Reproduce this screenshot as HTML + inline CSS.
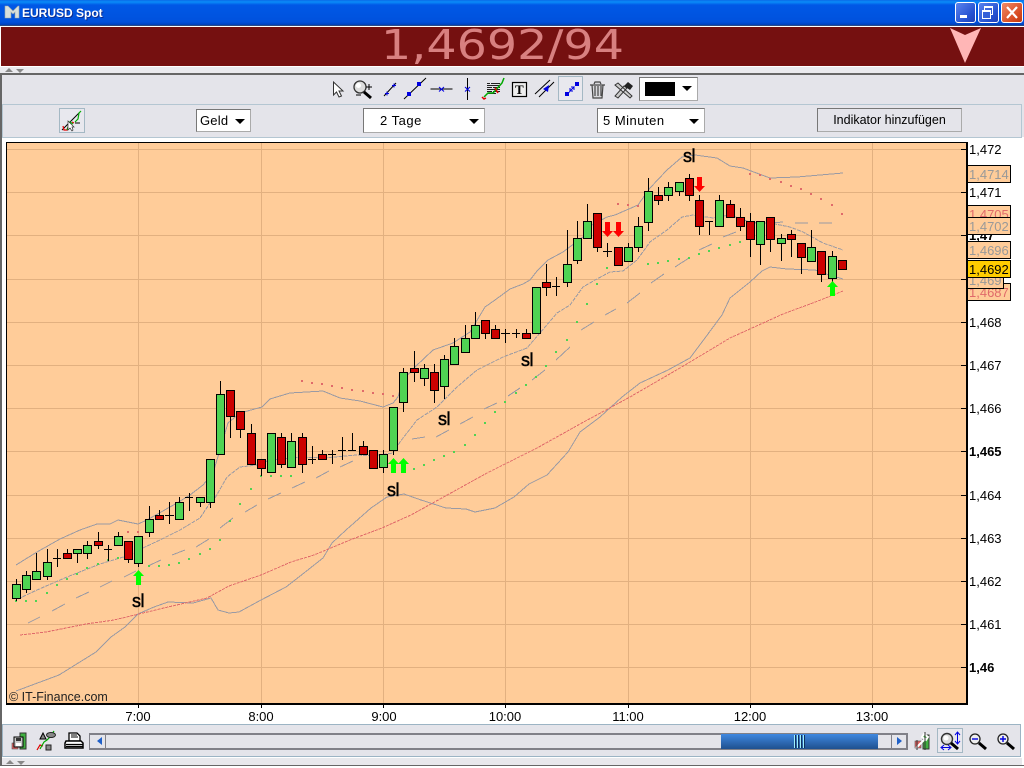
<!DOCTYPE html>
<html><head><meta charset="utf-8"><title>EURUSD Spot</title>
<style>
html,body{margin:0;padding:0;width:1024px;height:768px;overflow:hidden;background:#fff;font-family:"Liberation Sans",sans-serif;color:#000}
.a{position:absolute}
#title{left:0;top:0;width:1024px;height:26px;background:linear-gradient(#0a6ae8 0,#0a8cf8 2px,#0058e6 5px,#0054e0 16px,#0050dc 22px,#0040b8 25px,#555 26px)}
.wb{top:2px;width:19px;height:19px;border:1px solid #fff;border-radius:3px;background:linear-gradient(135deg,#5a84ee,#2450d0 70%,#2040b8)}
.dd{background:#fff;border:1px solid #777;border-right-color:#aaa;border-bottom-color:#aaa;box-sizing:border-box;font-size:13px;letter-spacing:.5px;line-height:22px;white-space:nowrap}
.tri{position:absolute;width:0;height:0;border-left:5px solid transparent;border-right:5px solid transparent;border-top:5px solid #000}
.lb{position:absolute;font-size:13px;line-height:14px;white-space:nowrap}
.tm{position:absolute;top:709px;width:60px;text-align:center;font-size:13px;line-height:15px}
.box{position:absolute;left:967px;width:44px;box-sizing:border-box;border:1.5px solid #000;background:#ffcc99;font-size:13px;line-height:17px;padding-left:1px;overflow:hidden;white-space:nowrap;color:#999}
.up{position:absolute;width:0;height:0;border-left:4px solid transparent;border-right:4px solid transparent;border-bottom:4px solid #888}
.dn{position:absolute;width:0;height:0;border-left:4px solid transparent;border-right:4px solid transparent;border-top:4px solid #888}
svg{position:absolute;left:0;top:0}
</style></head><body>
<div class="a" id="title"></div>
<svg width="24" height="26" style="left:2px"><path d="M3 18V6h3l5 5 5-5h1v12h-4v-6l-2 2-2-2v6z" fill="#d8e0dc" stroke="#9aa8a8" stroke-width=".6"/></svg>
<div class="a" style="left:22px;top:6px;color:#fff;font-weight:bold;font-size:12px;line-height:14px;text-shadow:1px 1px 0 #0a2a90">EURUSD Spot</div>
<div class="a wb" style="left:955px"><div class="a" style="left:4px;top:12px;width:7px;height:3px;background:#fff"></div></div>
<div class="a wb" style="left:978px"><div class="a" style="left:5px;top:3px;width:7px;height:6px;border:1px solid #fff;border-top-width:2px"></div><div class="a" style="left:3px;top:7px;width:7px;height:6px;border:1px solid #fff;border-top-width:2px;background:#3560d8"></div></div>
<div class="a wb" style="left:1001px;width:20px;background:linear-gradient(135deg,#ee8a68,#d84a20 70%,#c03810)"><svg width="20" height="19"><path d="M5 4l10 11M15 4L5 15" stroke="#fff" stroke-width="2.2"/></svg></div>

<div class="a" style="left:1px;top:27px;width:1023px;height:39px;background:#751010"></div>
<div class="a" style="left:381px;top:21px;font-family:'DejaVu Sans',sans-serif;font-size:41px;line-height:48px;color:#d88080;white-space:nowrap;transform:scaleX(1.16);transform-origin:0 0">1,4692/94</div>
<svg width="1024" height="70"><path d="M950 28l15 7 16-7-16 35z" fill="#ffb6b6"/></svg>

<div class="a" style="left:0;top:66px;width:1024px;height:1px;background:#fff"></div>
<div class="a" style="left:0;top:67px;width:1024px;height:7px;background:#eaeaee"></div>
<div class="up" style="left:5px;top:68px"></div><div class="dn" style="left:16px;top:69px"></div>
<div class="a" style="left:0;top:73px;width:1024px;height:2px;background:#666"></div>
<div class="a" style="left:2px;top:75px;width:1022px;height:62px;background:#e4e4ea"></div>
<div class="a" style="left:2px;top:104px;width:1018px;height:32px;border:1px solid #9cb4c4;outline:1px solid #b4c6d2;outline-offset:-1px"></div>
<div class="a" style="left:0;top:75px;width:2px;height:691px;background:#666"></div>

<!-- toolbar selection -->
<div class="a" style="left:558px;top:76px;width:25px;height:25px;box-sizing:border-box;border:1px solid #a4b8c4;background:#e8e8ee"></div>
<div class="a" style="left:59px;top:108px;width:26px;height:25px;box-sizing:border-box;border:1px solid #a4b8c4;background:#e8e8ee"></div>

<!-- dropdowns -->
<div class="a dd" style="left:639px;top:77px;width:59px;height:24px"><div class="a" style="left:5px;top:4px;width:30px;height:14px;background:#000"></div><div class="tri" style="left:42px;top:8px"></div></div>
<div class="a dd" style="left:196px;top:109px;width:55px;height:23px;padding-left:3px;letter-spacing:.2px">Geld<div class="tri" style="left:38px;top:9px"></div></div>
<div class="a dd" style="left:363px;top:108px;width:122px;height:25px;padding-left:16px;line-height:23px">2 Tage<div class="tri" style="left:105px;top:10px"></div></div>
<div class="a dd" style="left:597px;top:108px;width:108px;height:25px;padding-left:5px;line-height:23px">5 Minuten<div class="tri" style="left:91px;top:10px"></div></div>
<div class="a dd" style="left:817px;top:108px;width:145px;height:24px;background:#e4e4ea;font-size:12.5px;letter-spacing:0;text-align:center;line-height:23px">Indikator hinzufügen</div>

<!-- toolbar icons -->
<svg width="1024" height="140">
<path d="M333.5 82v13l3-3 2.5 5 2.5-1-2.5-5h4z" fill="#fff" stroke="#333"/>
<circle cx="360" cy="87" r="6" fill="#ddd" stroke="#333" stroke-width="1.3"/><circle cx="358.5" cy="85.5" r="2.5" fill="#fff"/>
<path d="M364 92l7 6" stroke="#000" stroke-width="3"/><path d="M366 87h6M369 84v6M356 95h5" stroke="#000"/>
<path d="M384 96l12-13M404 99l22-21M430.5 89h22M467.5 78v22" stroke="#000" fill="none"/>
<path d="M385 93.5h4M387 91.500v4M392 85.500h4M394 83.500v4M439 87l5 4.500M444 87l-5 4.500M465 87l5 4.500M470 87l-5 4.500" stroke="#0000e0" fill="none"/>
<path d="M407 92h4v4h-4zM417 82h4v4h-4z" fill="#0000e0"/>
<g fill="none"><path d="M487 83.500h3M491 83.500h9M487 85.500h13M487 87.500h5M493 87.500h7M487 89.500h13M487 91.500h5M493 91.500h7M487 93.500h9" stroke="#222"/><path d="M482 97l2 2 2-1" stroke="#e00000" stroke-width="1.500"/><path d="M484 97l4-4h5l9-10 2-5" stroke="#00a800" stroke-width="1.500"/><path d="M495 88l3 5" stroke="#e00000" stroke-width="1.500"/></g>
<rect x="512.5" y="82.500" width="14" height="14" fill="#eee" stroke="#000" stroke-width="1.200"/><text x="515" y="94" font-family="'Liberation Serif',serif" font-weight="bold" font-size="13">T</text>
<path d="M537 96l15-14M541 99l15-15" transform="translate(-2 -2)" stroke="#000" fill="none"/>
<path d="M544 88l6-4-1 7z" fill="#0000e0" transform="translate(-1 1)"/>
<path d="M565 92h4v4h-4zM575 82h4v4h-4z" fill="#0000e0"/><path d="M569 92l1 0M570.500 90.500l4-4M571 87h3v3M570 88v3h3" stroke="#0000e0" fill="none"/>
<path d="M590 85h15M592 85l1 13h9l1-13M595 86v10M598 86v10M601 86v10M594 84l1-2h5l1 2" fill="#d8d8dc" stroke="#444" stroke-width="1.200"/>
<path d="M615 85l3-2 14 13-2 2zM615 96l3 2 9-10-3-2z" fill="#ccc" stroke="#333"/><path d="M624 86l4-4 5 4-3 4z" fill="#222"/>
<!-- left chart icon -->
<path d="M62 130l18-18" stroke="#000" fill="none"/><path d="M75 123h5" stroke="#000" fill="none"/>
<path d="M63 126l1 4h3l2-6" stroke="#e00000" stroke-width="1.2" fill="none"/><path d="M67 130l3-8 3 2" stroke="#00a800" stroke-width="1.2" fill="none"/><path d="M72 122l2 1" stroke="#e00000" stroke-width="1.2"/><path d="M75 122l3-3 1-6 2-2" stroke="#00b000" stroke-width="1.2" fill="none"/>
<path d="M68 121v9l2-2 2 3 1-1-1-3h2z" fill="#fff" stroke="#333" stroke-width=".7"/>
</svg>

<!-- chart -->
<div class="a" style="left:6px;top:142px;width:962px;height:563px;box-sizing:border-box;border:solid #000;border-width:1px 2px 2px 1px;background:#ffcc99"></div>
<svg width="1024" height="768" style="font-family:'Liberation Sans',sans-serif">
<defs><clipPath id="c"><rect x="7" y="143" width="959" height="560"/></clipPath></defs>
<g stroke="#e2b080" fill="none" shape-rendering="crispEdges">
<path d="M7 149.500H966M7 192.500H966M7 235.500H966M7 279.500H966M7 322.500H966M7 365.500H966M7 408.500H966M7 451.500H966M7 495.500H966M7 538.500H966M7 581.500H966M7 624.500H966M7 667.500H966"/>
<path d="M138.5 143V703M261.5 143V703M383.5 143V703M505.5 143V703M628.5 143V703M750.5 143V703M872.5 143V703"/>
</g>
<g stroke="#000" shape-rendering="crispEdges"><path d="M961 149.500h6M961 192.500h6M961 235.500h6M961 279.500h6M961 322.500h6M961 365.500h6M961 408.500h6M961 451.500h6M961 495.500h6M961 538.500h6M961 581.500h6M961 624.500h6M961 667.500h6M138.5 704v4M261.5 704v4M383.5 704v4M505.5 704v4M628.5 704v4M750.5 704v4M872.5 704v4"/></g>
<g clip-path="url(#c)" fill="none" shape-rendering="crispEdges">
<!-- lower band -->
<path stroke="#9a9aa4" d="M16 691L59 675 96 652 111 637 125 627 138 614 154 607 168 602 193 603 211 598 218 610 229 613 239 612 261 600 286 587 304 573 323 558 332 543 346 530 371 508 387 497 404 494 421 500 446 508 466 509 475 512 495 508 514 497 529 484 547 475 568 452 580 432 600 417 622 397 640 383 668 370 690 358 705 338 722 315 730 298 750 282 762 271 770 267 787 269 815 270 823 273 843 279"/>
<!-- upper band -->
<path stroke="#9a9aa4" d="M16 565L37 552 60 539 80 530 97 524 110 524 118 520 138 524 147 520 177 503 190 495 203 485 213 473 220 450 225 433 228 423 240 413 262 407 270 399 290 393 323 391 340 398 360 401 383 407 393 403 398 397 403 380 415 367 433 350 453 343 470 332 485 307 495 300 510 289 523 284 530 280 537 271 548 260 563 252 583 237 592 225 607 217 615 215 638 205 650 188 667 170 682 157 695 155 717 158 730 166 743 168 770 178 797 177 843 173"/>
<!-- middle -->
<path stroke="#9a9aa4" stroke-dasharray="4 1" d="M18 599L37 590 67 577 100 564 130 555 143 548 160 540 180 530 200 518 210 503 215 498 227 477 240 467 257 465 270 460 300 457 323 458 357 455 373 456 393 453 400 442 417 420 437 407 457 387 477 370 503 357 527 348 540 333 557 313 570 305 583 287 595 280 610 272 623 271 637 260 650 242 667 230 682 217 693 215 713 218 730 215 750 222 770 223 790 227 803 232 823 243 843 250"/>
<!-- long dash MA -->
<path stroke="#9a9aa4" d="M28 623L40 617M52 611L65 604M76 598L89 592M100 587L112 581M124 577L136 571M148 566L161 560M172 555L185 550M196 547L209 539M220 528L233 518M245 512L257 505M268 499L281 493M292 488L305 482M316 478L329 471M340 467L353 461M412 439L425 437M436 437L449 430M460 424L473 417M484 409L497 403M508 396L520 388M532 380L545 370M556 360L570 347M581 330L594 322M605 315L616 309M627 303L640 293M651 283L664 274M675 267L689 258M699 250L712 244M723 237L736 232M747 225L760 222M772 223L783 222M795 223L808 223M819 223L832 223"/>
<!-- red MA -->
<path stroke="#e06a6a" stroke-dasharray="3 1" d="M20 635L46 632 86 624 114 620 139 614 168 607 207 598 229 586 261 575 291 562 314 555 350 540 382 528 411 515 440 499 487 473 537 448 580 424 630 397 680 368 730 338 783 314 818 301 843 291"/>
</g>
<!-- PSAR dots -->
<g fill="#4fd353" shape-rendering="crispEdges">
<rect x="15" y="600" width="2" height="2"/><rect x="25" y="600" width="2" height="2"/><rect x="35" y="600" width="2" height="2"/><rect x="46" y="592" width="2" height="2"/><rect x="56" y="584" width="2" height="2"/><rect x="66" y="578" width="2" height="2"/><rect x="76" y="573" width="2" height="2"/><rect x="86" y="567" width="2" height="2"/><rect x="97" y="563" width="2" height="2"/><rect x="107" y="559" width="2" height="2"/><rect x="117" y="557" width="2" height="2"/><rect x="148" y="565" width="2" height="2"/><rect x="158" y="565" width="2" height="2"/><rect x="168" y="564" width="2" height="2"/><rect x="178" y="562" width="2" height="2"/><rect x="188" y="558" width="2" height="2"/><rect x="199" y="553" width="2" height="2"/><rect x="209" y="548" width="2" height="2"/><rect x="219" y="539" width="2" height="2"/><rect x="229" y="520" width="2" height="2"/><rect x="239" y="503" width="2" height="2"/><rect x="250" y="488" width="2" height="2"/><rect x="260" y="475" width="2" height="2"/><rect x="270" y="475" width="2" height="2"/><rect x="280" y="475" width="2" height="2"/><rect x="290" y="475" width="2" height="2"/><rect x="413" y="468" width="2" height="2"/><rect x="423" y="464" width="2" height="2"/><rect x="433" y="459" width="2" height="2"/><rect x="443" y="455" width="2" height="2"/><rect x="453" y="451" width="2" height="2"/><rect x="464" y="444" width="2" height="2"/><rect x="474" y="434" width="2" height="2"/><rect x="484" y="422" width="2" height="2"/><rect x="494" y="411" width="2" height="2"/><rect x="504" y="401" width="2" height="2"/><rect x="515" y="392" width="2" height="2"/><rect x="525" y="384" width="2" height="2"/><rect x="535" y="376" width="2" height="2"/><rect x="545" y="365" width="2" height="2"/><rect x="555" y="351" width="2" height="2"/><rect x="566" y="339" width="2" height="2"/><rect x="576" y="321" width="2" height="2"/><rect x="586" y="303" width="2" height="2"/><rect x="596" y="283" width="2" height="2"/><rect x="606" y="267" width="2" height="2"/><rect x="647" y="263" width="2" height="2"/><rect x="657" y="262" width="2" height="2"/><rect x="667" y="260" width="2" height="2"/><rect x="678" y="258" width="2" height="2"/><rect x="688" y="257" width="2" height="2"/><rect x="698" y="253" width="2" height="2"/><rect x="708" y="250" width="2" height="2"/><rect x="718" y="247" width="2" height="2"/><rect x="729" y="244" width="2" height="2"/><rect x="739" y="241" width="2" height="2"/>
</g>
<g fill="#e06a6a" shape-rendering="crispEdges">
<rect x="127" y="531" width="2" height="2"/><rect x="137" y="531" width="2" height="2"/><rect x="301" y="380" width="2" height="2"/><rect x="311" y="382" width="2" height="2"/><rect x="321" y="383" width="2" height="2"/><rect x="331" y="385" width="2" height="2"/><rect x="341" y="387" width="2" height="2"/><rect x="351" y="389" width="2" height="2"/><rect x="362" y="390" width="2" height="2"/><rect x="372" y="392" width="2" height="2"/><rect x="382" y="393" width="2" height="2"/><rect x="392" y="395" width="2" height="2"/><rect x="617" y="203" width="2" height="2"/><rect x="627" y="204" width="2" height="2"/><rect x="637" y="205" width="2" height="2"/><rect x="749" y="173" width="2" height="2"/><rect x="759" y="174" width="2" height="2"/><rect x="769" y="178" width="2" height="2"/><rect x="780" y="181" width="2" height="2"/><rect x="790" y="185" width="2" height="2"/><rect x="800" y="188" width="2" height="2"/><rect x="810" y="193" width="2" height="2"/><rect x="820" y="198" width="2" height="2"/><rect x="831" y="204" width="2" height="2"/><rect x="841" y="213" width="2" height="2"/>
</g>
<!-- wicks and dojis -->
<path stroke="#000" stroke-width="1.3" fill="none" shape-rendering="crispEdges" d="M16.5 579V601M26.5 571V593M36.5 553V579M47.5 549V580M57.5 549V567M53 558.5H61M67.5 549V558M77.5 549V563M87.5 541V559M98.5 532V549M108.5 545V561M104 549.5H112M118.5 532V545M128.5 541V563M138.5 536V567M149.5 506V537M159.5 510V519M169.5 502V524M165 515.5H174M179.5 497V519M189.5 493V511M185 497.5H193M200.5 497V507M210.5 459V508M220.5 381V454M230.5 390V438M240.5 411V438M251.5 424V464M261.5 459V476M271.5 433V472M281.5 433V468M291.5 433V467M302.5 433V473M312.5 446V464M308 459.5H316M322.5 450V459M332.5 450V464M328 454.5H336M342.5 437V460M338 450.5H346M352.5 433V450M348 450.5H356M363.5 441V454M373.5 450V468M383.5 450V473M393.5 407V455M403.5 368V412M414.5 351V382M424.5 364V386M434.5 364V403M444.5 355V399M454.5 338V364M465.5 325V352M475.5 312V338M485.5 320V339M495.5 325V338M505.5 329V343M501 333.5H510M516.5 329V338M512 333.5H520M526.5 329V338M536.5 287V333M546.5 264V296M556.5 277V296M552 286.5H560M567.5 230V287M577.5 221V264M587.5 204V238M597.5 213V252M607.5 243V257M603 251.5H612M618.5 247V265M628.5 243V261M638.5 217V252M648.5 178V231M658.5 187V205M668.5 182V201M679.5 182V196M689.5 174V201M699.5 195V235M709.5 221V235M705 221.5H713M719.5 195V226M730.5 200V217M740.5 208V231M750.5 213V257M760.5 221V265M770.5 217V252M781.5 234V261M791.5 230V257M801.5 243V274M811.5 230V261M821.5 251V282M832.5 251V282M842.5 260V269"/>
<!-- green bodies -->
<g fill="#4fd353" stroke="#000" stroke-width="1.3" shape-rendering="crispEdges">
<rect x="12.5" y="584.5" width="8" height="14"/><rect x="22.5" y="575.5" width="8" height="14"/><rect x="32.5" y="571.5" width="8" height="8"/><rect x="43.5" y="562.5" width="8" height="14"/><rect x="73.5" y="549.5" width="8" height="4"/><rect x="83.5" y="545.5" width="8" height="8"/><rect x="114.5" y="536.5" width="8" height="9"/><rect x="134.5" y="536.5" width="8" height="27"/><rect x="145.5" y="519.5" width="8" height="13"/><rect x="175.5" y="502.5" width="8" height="17"/><rect x="196.5" y="497.5" width="8" height="5"/><rect x="206.5" y="459.5" width="8" height="43"/><rect x="216.5" y="394.5" width="8" height="60"/><rect x="267.5" y="433.5" width="8" height="39"/><rect x="287.5" y="441.5" width="8" height="26"/><rect x="379.5" y="454.5" width="8" height="13"/><rect x="389.5" y="407.5" width="8" height="43"/><rect x="399.5" y="372.5" width="8" height="30"/><rect x="420.5" y="368.5" width="8" height="10"/><rect x="440.5" y="359.5" width="8" height="27"/><rect x="450.5" y="346.5" width="8" height="18"/><rect x="461.5" y="338.5" width="8" height="14"/><rect x="471.5" y="325.5" width="8" height="13"/><rect x="532.5" y="287.5" width="8" height="46"/><rect x="563.5" y="264.5" width="8" height="18"/><rect x="573.5" y="238.5" width="8" height="22"/><rect x="583.5" y="221.5" width="8" height="17"/><rect x="624.5" y="247.5" width="8" height="14"/><rect x="634.5" y="226.5" width="8" height="21"/><rect x="644.5" y="191.5" width="8" height="31"/><rect x="664.5" y="187.5" width="8" height="8"/><rect x="675.5" y="182.5" width="8" height="9"/><rect x="715.5" y="200.5" width="8" height="26"/><rect x="756.5" y="221.5" width="8" height="23"/><rect x="777.5" y="238.5" width="8" height="5"/><rect x="807.5" y="247.5" width="8" height="14"/><rect x="828.5" y="256.5" width="8" height="22"/>
</g>
<!-- red bodies -->
<g fill="#cc0000" stroke="#000" stroke-width="1.3" shape-rendering="crispEdges">
<rect x="63.5" y="553.5" width="8" height="5"/><rect x="94.5" y="541.5" width="8" height="4"/><rect x="124.5" y="541.5" width="8" height="18"/><rect x="155.5" y="515.5" width="8" height="4"/><rect x="226.5" y="390.5" width="8" height="26"/><rect x="236.5" y="411.5" width="8" height="18"/><rect x="247.5" y="433.5" width="8" height="31"/><rect x="257.5" y="459.5" width="8" height="9"/><rect x="277.5" y="437.5" width="8" height="27"/><rect x="298.5" y="437.5" width="8" height="27"/><rect x="318.5" y="454.5" width="8" height="5"/><rect x="359.5" y="446.5" width="8" height="8"/><rect x="369.5" y="450.5" width="8" height="18"/><rect x="410.5" y="368.5" width="8" height="4"/><rect x="430.5" y="372.5" width="8" height="18"/><rect x="481.5" y="320.5" width="8" height="13"/><rect x="491.5" y="329.5" width="8" height="9"/><rect x="522.5" y="333.5" width="8" height="5"/><rect x="542.5" y="282.5" width="8" height="5"/><rect x="593.5" y="213.5" width="8" height="34"/><rect x="614.5" y="247.5" width="8" height="18"/><rect x="654.5" y="195.5" width="8" height="5"/><rect x="685.5" y="178.5" width="8" height="17"/><rect x="695.5" y="200.5" width="8" height="26"/><rect x="726.5" y="204.5" width="8" height="13"/><rect x="736.5" y="217.5" width="8" height="9"/><rect x="746.5" y="221.5" width="8" height="18"/><rect x="766.5" y="217.5" width="8" height="22"/><rect x="787.5" y="234.5" width="8" height="5"/><rect x="797.5" y="243.5" width="8" height="14"/><rect x="817.5" y="251.5" width="8" height="23"/><rect x="838.5" y="260.5" width="8" height="9"/>
</g>
<!-- arrows -->
<g fill="#00ff00"><path d="M138.5 570l5.5 6h-3v9h-5v-9h-3z"/><path d="M393.5 458l5.5 6h-3v9h-5v-9h-3z"/><path d="M403.5 458l5.5 6h-3v9h-5v-9h-3z"/><path d="M832.5 281l5.5 6h-3v9h-5v-9h-3z"/></g>
<g fill="#ff0000"><path d="M607.5 237l5.5-6h-3v-9h-5v9h-3z"/><path d="M618.5 237l5.5-6h-3v-9h-5v9h-3z"/><path d="M699.5 192l5.500-6h-3v-9h-5v9h-3z"/></g>
<!-- sl labels -->
<g font-size="18" fill="#000" stroke="#000" stroke-width=".45" letter-spacing="-.5"><text x="132" y="607">sl</text><text x="387" y="496">sl</text><text x="521" y="366">sl</text><text x="438" y="425">sl</text><text x="683" y="162">sl</text></g>
<text x="9" y="701" font-size="12.5" fill="#222">© IT-Finance.com</text>
</svg>

<!-- axis -->
<div class="lb" style="left:969px;top:143px">1,472</div>
<div class="lb" style="left:969px;top:186px">1,471</div>
<div class="lb" style="left:969px;top:229px;font-weight:bold">1,47</div>
<div class="lb" style="left:969px;top:316px">1,468</div>
<div class="lb" style="left:969px;top:359px">1,467</div>
<div class="lb" style="left:969px;top:402px">1,466</div>
<div class="lb" style="left:969px;top:445px;font-weight:bold">1,465</div>
<div class="lb" style="left:969px;top:489px">1,464</div>
<div class="lb" style="left:969px;top:532px">1,463</div>
<div class="lb" style="left:969px;top:575px">1,462</div>
<div class="lb" style="left:969px;top:618px">1,461</div>
<div class="lb" style="left:969px;top:661px;font-weight:bold">1,46</div>
<div class="box" style="top:165px;height:18px">1,4714</div>
<div class="box" style="top:205px;height:18px;color:#e06a6a">1,4705</div>
<div class="box" style="top:217px;height:18px">1,4702</div>
<div class="box" style="top:283px;height:18px;color:#e06a6a">1,4687</div>
<div class="box" style="top:271px;height:18px;width:37px;line-height:18px">1,469</div>
<div class="box" style="top:241px;height:18px">1,4696</div>
<div class="box" style="top:260px;height:18px;background:#ffcc00;color:#000">1,4692</div>

<div class="tm" style="left:108px">7:00</div><div class="tm" style="left:231px">8:00</div><div class="tm" style="left:354px">9:00</div><div class="tm" style="left:475px">10:00</div><div class="tm" style="left:598px">11:00</div><div class="tm" style="left:720px">12:00</div><div class="tm" style="left:842px">13:00</div>

<!-- bottom panel -->
<div class="a" style="left:2px;top:724px;box-sizing:border-box;border:1px solid #9cb4c4;background:#e4e4ea;width:1019px;height:33px"></div>
<div class="a" style="left:2px;top:758px;width:1020px;height:7px;background:#e8e8ec"></div>
<div class="up" style="left:6px;top:760px"></div><div class="dn" style="left:17px;top:761px"></div>
<div class="a" style="left:0;top:765px;width:1024px;height:1px;background:#666"></div>

<div class="a" style="left:89px;top:733px;width:818px;height:17px;box-sizing:border-box;border:1px solid #808088;border-width:2px 1px;background:#e4e4ea"></div>
<div class="a" style="left:89px;top:733px;width:17px;height:17px;box-sizing:border-box;border:1px solid #808088"></div>
<div class="a" style="left:891px;top:733px;width:17px;height:17px;box-sizing:border-box;border:1px solid #808088"></div>
<div class="a" style="left:721px;top:734px;width:157px;height:15px;background:linear-gradient(#3f88e0,#1f508f)"></div>
<svg width="1024" height="768">
<path d="M102 737v8l-5-4zM897 737v8l5-4z" fill="#2060c8"/>
<path d="M794.5 735v13M797.5 735v13M800.5 735v13M803.5 735v13" stroke="#9ef0ff" fill="none"/><path d="M795.5 735v13M798.5 735v13M801.5 735v13M804.5 735v13" stroke="#103060" fill="none"/>
<!-- disk candle -->
<rect x="12" y="743" width="6" height="6" fill="#e06060" stroke="#555" stroke-width=".6"/><rect x="20" y="733" width="6" height="16" fill="#40b040" stroke="#333"/>
<rect x="14" y="737" width="9" height="10" fill="#c8c8c8" stroke="#000"/><rect x="16" y="738" width="5" height="3" fill="#333"/><rect x="16" y="743" width="5" height="3" fill="#fff"/>
<!-- draw tools -->
<path d="M37 750l3-5 3 1" stroke="#e00000" stroke-width="1.2" fill="none"/><path d="M40 749l4-7 3-2 3-3 4-6" stroke="#00a800" stroke-width="1.2" fill="none"/><path d="M40 739l3-6 3 6z" fill="#888" stroke="#000"/><rect x="46" y="745" width="5" height="5" fill="#888" stroke="#222"/><ellipse cx="51" cy="735" rx="4.5" ry="2.5" fill="#888" stroke="#222"/>
<!-- printer -->
<path d="M69 733h8l3 3v5H69z" fill="#fff" stroke="#000" stroke-width="1.300"/><path d="M71 735h6M71 737h7" stroke="#000"/><path d="M66 741h15l2 2v5H65v-5z" fill="#fff" stroke="#000" stroke-width="1.500"/><path d="M66 744.500h17M66 746.500h17" stroke="#000" stroke-width="1.300"/>
<!-- wrench candle -->
<rect x="915" y="741" width="6" height="7" fill="#e06060" stroke="#555" stroke-width=".6"/><rect x="923" y="735" width="6" height="14" fill="#40b040" stroke="#333"/>
<path d="M916 748l10-10M924 734l4 3-2 3-4-3z" stroke="#fff" stroke-width="2" fill="none"/><path d="M925 732v18M917 740v10" stroke="#333" fill="none"/>
<!-- selected zoom fit -->
<rect x="937.5" y="728.5" width="25" height="24" fill="#e8e8ee" stroke="#a4b8c4"/>
<circle cx="947" cy="739" r="5.5" fill="#ddd" stroke="#333" stroke-width="1.4"/><circle cx="946" cy="738" r="2.5" fill="#fff"/><path d="M951 743l7 6" stroke="#000" stroke-width="3"/>
<path d="M957.5 733v10M955 735l2.5-3 2.5 3M955 741l2.5 3 2.5-3M942 747.5h8M944 745l-3 2.5 3 2.5M948 745l3 2.5-3 2.5" stroke="#0000e0" fill="none"/>
<!-- zoom out -->
<circle cx="975" cy="739" r="5" fill="#eee" stroke="#222" stroke-width="1.3"/><path d="M972 739h6" stroke="#0000e0" stroke-width="1.4"/><path d="M979 743l7 6" stroke="#000" stroke-width="3"/>
<!-- zoom in -->
<circle cx="1003" cy="739" r="5" fill="#eee" stroke="#222" stroke-width="1.3"/><path d="M1000 739h6M1003 736v6" stroke="#0000e0" stroke-width="1.4"/><path d="M1007 743l7 6" stroke="#000" stroke-width="3"/>
</svg>
</body></html>
